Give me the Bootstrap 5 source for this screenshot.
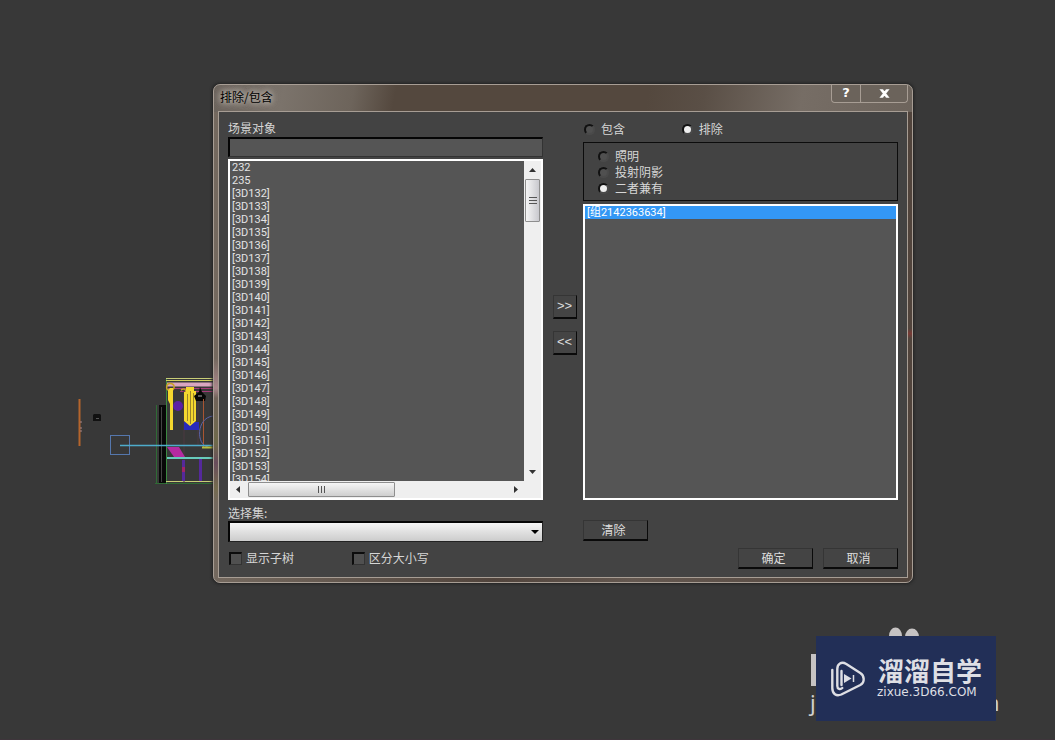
<!DOCTYPE html>
<html lang="zh-CN">
<head>
<meta charset="utf-8">
<meta name="viewport" content="width=device-width, initial-scale=1">
<title>排除/包含</title>
<link rel="stylesheet" href="https://cdn.jsdelivr.net/npm/bootstrap@5.3.0/dist/css/bootstrap.min.css">
<style>
  body { background: #383838; color: #d6d6d6; font: 12px/16px "Noto Sans CJK SC", sans-serif; }
  .desk { min-height: 100vh; border-bottom: 1px solid #3e353b; }
  .scene { position: absolute; left: 76px; top: 374px; width: 137px; height: 114px; }
  .win { position: absolute; left: 213px; right: 142px; top: 84px; padding: 0 4px 4px;
    border: 1px solid #a79d94; border-radius: 7px;
    background:
      linear-gradient(to bottom, transparent 55%, #d7a0b288 61%, #6b595055 63%, #6b6b3a88 72%, #60355a88 76%, #77702f55 81%, transparent 84%) 0 0 / 5px 100% no-repeat,
      linear-gradient(to bottom, transparent 49%, #7a3a35 50%, transparent 51%) 100% 0 / 4px 100% no-repeat,
      linear-gradient(100deg, #6b635c 0, #7b736b 10%, #6d645b 20%, #54483e 26%, #54483e 62%, #5a4f46 70%, #766d65 84%, #6d645c 100%) 0 0 / 100% 27px no-repeat,
      linear-gradient(to right, #74695f, #51443c 40%, #645850 60%, #51443c);
    box-shadow: 0 0 3px 1px #222; }
  .win-title { height: 26px; color: #000; }
  .win-title h1 { margin: 4px 0 0 2px; font-size: 12px; line-height: 16px; font-weight: 400; text-shadow: 0 0 6px #bdb6ae, 0 0 6px #bdb6ae, 0 0 9px #bdb6ae; }
  .win-btns { height: 18px; border: 1px solid #a79d94; border-top: 0; border-radius: 0 0 4px 4px; }
  .win-btns button { width: 46px; padding: 0 0 2px; border: 0; background: #6b635b; color: #fff; font: bold 13px/16px "DejaVu Sans", sans-serif; border-radius: 0 0 4px 4px; }
  .win-btns button:first-child { width: 29px; border-right: 1px solid #a79d94; border-radius: 0 0 0 4px; }
  .win-body { background: #434343; border: 1px solid #a79d94; padding: 8px 9px 8px; display: grid; grid-template-columns: 1fr 40px 1fr; }
  .search { height: 20px; margin-top: 1px; padding: 0 4px; border-radius: 0; background: #555 !important; border: 1px solid #333; border-top: 2px solid #050505; border-left: 2px solid #050505; color: #ddd; }
  .pane { border: 2px solid #fff; background: #555; font: 11px/12px Roboto, "Noto Sans CJK SC", sans-serif; color: #e4e4e4; }
  .pane-left { height: 341px; margin-top: 2px; display: grid; grid-template: 1fr 17px / 1fr 17px; }
  .pane-right { height: 296px; margin-top: 3px; }
  .pane ul { min-height: 0; overflow: hidden; }
  .pane li { height: 13px; padding: 1px 0 0 2px; white-space: nowrap; }
  .pane li[aria-selected="true"] { background: #3397f5; color: #fff; }
  .bar-v, .bar-h { background: #efefef; display: flex; align-items: center; }
  .bar-v { flex-direction: column; padding: 7px 0; }
  .bar-h { padding: 0 6px; }
  .grip { border: 1px solid #8e8e8e; border-radius: 1px; display: flex; align-items: center; justify-content: center; }
  .bar-v .grip { width: 15px; height: 43px; margin-top: 7px; background: linear-gradient(to right, #f5f5f5, #c9c9ce); }
  .bar-h .grip { width: 147px; height: 15px; margin-left: 8px; background: linear-gradient(#f5f5f5, #cfcfcf); }
  .combo-label { margin-top: 5px; }
  .combo { height: 21px; padding: 0; border-radius: 0; border: 1px solid #222; border-top: 2px solid #050505; border-left: 2px solid #050505; background-color: #ddd;
    background-image: url("data:image/svg+xml,%3Csvg xmlns='http://www.w3.org/2000/svg' viewBox='0 0 8 4'%3E%3Cpath d='M0 0h8L4 4z'/%3E%3C/svg%3E"), linear-gradient(#f4f4f4, #ccc);
    background-size: 8px 4px, 100% 100%; background-position: right 3px center, 0 0; }
  .opt { display: flex; align-items: center; height: 16px; }
  .opt input { appearance: none; flex: none; margin: 0; background: #505050; }
  .opt input[type="checkbox"] { width: 13px; height: 13px; margin: 0 4px 0 1px; border: 1px solid #333; border-top: 2px solid #0c0c0c; border-left: 2px solid #0c0c0c; }
  .opt input[type="radio"] { width: 11px; height: 11px; margin: 0 6px 0 1px; border-radius: 50%; border: 2px solid #111; border-right-color: #4a4a4a; border-bottom-color: #4a4a4a; }
  .opt input[type="radio"]:checked { background: #eee; }
  .modes { margin-top: 1px; }
  .group { border: 1px solid #0c0c0c; height: 59px; margin-top: 5px; padding: 5px 13px; }
  .flat { border: 1px solid #353535; border-right: 1px solid #0a0a0a; border-bottom: 2px solid #0a0a0a; border-radius: 0; background: #444; color: #ddd; padding: 0 4px 0 0; font-size: 12px; line-height: 16px; width: 75px; height: 21px; }
  .flat-sm { width: 65px; margin-top: 20px; }
  .flat-mv { width: 24px; height: 24px; padding: 0; font: 13px/16px "Liberation Sans", sans-serif; }
  .movers { gap: 12px; padding: 0 0 40px 3px; }
  .confirm { gap: 10px; margin-top: 7px; }
  .brand { position: absolute; right: 55px; bottom: 14px; width: 192px; height: 100px; }
</style>
</head>
<body>
<main class="desk position-relative overflow-hidden">
  <svg class="scene" viewBox="76 374 137 114" fill="none" aria-hidden="true">
    <path d="M79.500 399V446" stroke="#b5652c" stroke-width="2"/>
    <path d="M81 421v3M81 427v5" stroke="#aa8585" stroke-dasharray="2 1"/>
    <path d="M93 415l1-1h6l1 1v6h-8z" fill="#111"/><path d="M96 418.500h3" stroke="#555"/>
    <rect x="110.500" y="435.500" width="19" height="19" stroke="#5577ad"/>
    <path d="M156.500 405V483.500M155 483.500H213" stroke="#2f6b35"/>
    <rect x="159" y="405" width="7" height="78" fill="#080808"/><path d="M161.500 407V482" stroke="#444"/>
    <path d="M166.500 378V484" stroke="#3c8a41"/>
    <path d="M166 378.500H213M166 481.500H213" stroke="#c9ce77"/>
    <path d="M166 380.500H213" stroke="#d0d05c"/>
    <path d="M167 384.500H213" stroke="#d9a6c0" stroke-width="4"/>
    <path d="M168 388.500H213M180 391.500H213" stroke="#a53a78"/>
    <path d="M184 390V483M198 394V445" stroke="#4b3840"/>
    <circle cx="178" cy="406" r="5" fill="#5b20a5"/>
    <path d="M184 422h15v8h-15z" fill="#2929bb"/>
    <path d="M170 383.500c6 0 5 7 0 7s-4-7 0-7M181 390c5-3 6 2 4 6" stroke="#c9a227" stroke-width="1.500"/>
    <path d="M170 388h3v42h-3v-26l-2-4v-10z" fill="#f4d72e"/>
    <path d="M186 387h8v4h2v30l-6 5-6-5v-29h2z" fill="#f4d72e"/>
    <path d="M187.500 394v27M190.500 391v33M193.500 393v28" stroke="#735e29" stroke-width=".7"/>
    <path d="M200 387l2 5 4 4-1 5h-9l-2-5 5-4z" fill="#050505"/><path d="M198 396h4" stroke="#aaa"/>
    <path d="M203.500 399V447" stroke="#a95532"/>
    <path d="M213 416c-17 2-17 29-5 31" stroke="#5a63a9"/>
    <path d="M120 445.500H213" stroke="#4eaccb" stroke-width="1.500"/>
    <path d="M202 447.500H213" stroke="#b7bd3d" stroke-width="2"/>
    <path d="M167 447h12l6 10h-11z" fill="#b52aa1"/>
    <path d="M167 458H213" stroke="#68cbbc" stroke-width="2"/>
    <path d="M183.500 460V481M200.500 459V481" stroke="#55299b" stroke-width="3"/>
    <path d="M183.500 467v5" stroke="#a02467" stroke-width="3"/>
  </svg>

  <section class="win" role="dialog" aria-labelledby="winTitle">
    <header class="win-title d-flex justify-content-between align-items-start">
      <h1 id="winTitle">排除/包含</h1>
      <div class="win-btns d-flex">
        <button type="button" aria-label="帮助">?</button>
        <button type="button" aria-label="关闭"><svg width="11" height="9" viewBox="0 0 11 9" aria-hidden="true"><path d="M0 0h4l1.500 2L7 0h4L7.500 4.500 11 9H7L5.500 7 4 9H0l3.500-4.500z" fill="#fff" stroke="#494440" stroke-width=".4"/></svg></button>
      </div>
    </header>

    <form class="win-body">
      <div>
        <label class="d-block" for="find">场景对象</label>
        <input class="form-control search" id="find" type="text">
        <div class="pane pane-left">
          <ul class="list-unstyled mb-0" role="listbox" aria-label="场景对象">
            <li>232</li><li>235</li><li>[3D132]</li><li>[3D133]</li><li>[3D134]</li><li>[3D135]</li><li>[3D136]</li><li>[3D137]</li><li>[3D138]</li><li>[3D139]</li><li>[3D140]</li><li>[3D141]</li><li>[3D142]</li><li>[3D143]</li><li>[3D144]</li><li>[3D145]</li><li>[3D146]</li><li>[3D147]</li><li>[3D148]</li><li>[3D149]</li><li>[3D150]</li><li>[3D151]</li><li>[3D152]</li><li>[3D153]</li><li>[3D154]</li>
          </ul>
          <div class="bar-v">
            <svg width="7" height="4" viewBox="0 0 7 4"><path d="M3.500 0L7 4H0z" fill="#333"/></svg>
            <div class="grip"><svg width="8" height="9" viewBox="0 0 8 9"><path d="M0 1.500h8M0 4.500h8M0 7.500h8" stroke="#555"/></svg></div>
            <svg class="mt-auto" width="7" height="4" viewBox="0 0 7 4"><path d="M0 0h7L3.500 4z" fill="#333"/></svg>
          </div>
          <div class="bar-h">
            <svg width="4" height="7" viewBox="0 0 4 7"><path d="M4 0v7L0 3.500z" fill="#333"/></svg>
            <div class="grip"><svg width="9" height="7" viewBox="0 0 9 7"><path d="M1.500 0v7M4.500 0v7M7.500 0v7" stroke="#555"/></svg></div>
            <svg class="ms-auto" width="4" height="7" viewBox="0 0 4 7"><path d="M0 0v7l4-3.500z" fill="#333"/></svg>
          </div>
          <div class="bar-h"></div>
        </div>
        <label class="d-block combo-label" for="sets">选择集:</label>
        <select class="form-select combo" id="sets"><option></option></select>
        <div class="row g-0 mt-2">
          <label class="opt col-auto" style="width:39%"><input type="checkbox">显示子树</label>
          <label class="opt col-auto"><input type="checkbox">区分大小写</label>
        </div>
      </div>

      <div class="movers d-flex flex-column align-items-center justify-content-center">
        <button class="btn flat flat-mv" type="button">&gt;&gt;</button>
        <button class="btn flat flat-mv" type="button">&lt;&lt;</button>
      </div>

      <div class="d-flex flex-column">
        <div class="modes row g-0">
          <label class="opt" style="width:31%"><input type="radio" name="mode">包含</label>
          <label class="opt col-auto"><input type="radio" name="mode" checked>排除</label>
        </div>
        <div class="group">
          <label class="opt"><input type="radio" name="kind">照明</label>
          <label class="opt"><input type="radio" name="kind">投射阴影</label>
          <label class="opt"><input type="radio" name="kind" checked>二者兼有</label>
        </div>
        <div class="pane pane-right">
          <ul class="list-unstyled mb-0" role="listbox" aria-label="排除"><li role="option" aria-selected="true">[组2142363634]</li></ul>
        </div>
        <button class="btn flat flat-sm" type="button">清除</button>
        <div class="confirm d-flex justify-content-end">
          <button class="btn flat" type="submit">确定</button>
          <button class="btn flat" type="button">取消</button>
        </div>
      </div>
    </form>
  </section>

  <svg class="brand" viewBox="808 625 192 100" role="img" aria-label="溜溜自学 zixue.3D66.COM">
    <ellipse cx="895.500" cy="636" rx="6.500" ry="8.500" fill="#c6c3c3"/><ellipse cx="912" cy="637" rx="7" ry="8.500" fill="#c6c3c3"/>
    <path d="M811 654h10v32h-10z" fill="#c6c3c3"/>
    <text x="810" y="711" font-family="Noto Sans" font-size="22" fill="#d0d0d0">j</text>
    <text x="979" y="711" font-family="Noto Sans" font-size="22" fill="#d0d0d0">m</text>
    <rect x="816" y="636" width="180" height="85" fill="#222f57"/>
    <g fill="none" stroke="#dedfe4" stroke-width="2.400" stroke-linecap="round" stroke-linejoin="round">
      <path d="M832.300 670v18c0 6 4 8.500 9 6.500l19-9.500c5-3 4-9.500 0-12l-14-9c-5-3-9 0-9 5v17c0 3 3 4 5 2"/>
      <path d="M841.500 671v14"/>
    </g>
    <path d="M844 674v9l7.500-4.500z" fill="#dedfe4"/><path d="M853.500 675v7" stroke="#dedfe4" stroke-width="1.500"/>
    <text x="878" y="681" font-family="Noto Sans CJK SC" font-weight="700" font-size="26" fill="#dedfe4">溜溜自学</text>
    <text x="877" y="696" font-family="DejaVu Sans" font-size="12" fill="#dedfe4">zixue.3D66.COM</text>
  </svg>
</main>
<script src="https://cdn.jsdelivr.net/npm/bootstrap@5.3.0/dist/js/bootstrap.bundle.min.js"></script>
</body>
</html>
